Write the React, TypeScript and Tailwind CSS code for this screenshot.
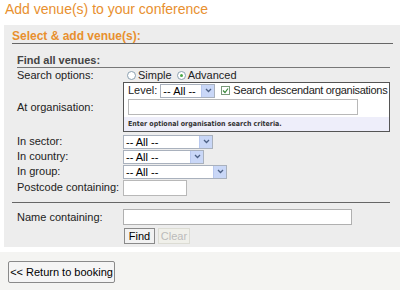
import React from "react";

const Sel = ({ w }: { w: number }) => (
  <div
    className="flex h-[14px] shrink-0 items-stretch border border-[#a9b1bd] bg-white text-[11px] leading-[12px] text-black"
    style={{ width: w }}
  >
    <span className="flex-1 pl-[2px]">-- All --</span>
    <span className="flex w-[13px] items-center justify-center bg-[#c9d7f7] border-l border-[#b8c8ee]">
      <svg width="7" height="5" viewBox="0 0 7 5">
        <path d="M1 1 L3.5 3.5 L6 1" stroke="#4d6185" strokeWidth="1.3" fill="none" />
      </svg>
    </span>
  </div>
);

const Radio = ({ on }: { on?: boolean }) => (
  <span className="relative inline-block h-[9px] w-[9px] rounded-full border border-[#8aa0b0] bg-white">
    {on && <span className="absolute left-[2px] top-[2px] h-[3px] w-[3px] rounded-full bg-[#4aa84a]" />}
  </span>
);

const Row = ({ label, h, children, cls = "" }: { label: string; h: number; children?: React.ReactNode; cls?: string }) => (
  <div className={"flex items-center " + cls} style={{ height: h }}>
    <div className="w-[106px] shrink-0 whitespace-nowrap text-[11px] text-[#222]">{label}</div>
    {children}
  </div>
);

export default function App() {
  return (
    <div
      className="flex h-[290px] w-[400px] flex-col overflow-hidden bg-white"
      style={{ fontFamily: '"Liberation Sans", Arial, sans-serif' }}
    >
      <div className="h-[25px] shrink-0 pl-[5px] text-[14px] leading-[19px] text-[#e8902f]">
        Add venue(s) to your conference
      </div>
      <div className="ml-[4px] h-[222px] shrink-0 bg-[#ededed] pl-[8px] pr-[7px] pt-[4px]">
        <div className="h-[15px] border-b border-[#666] text-[12px] font-bold leading-[14px] text-[#e8902f]">
          Select &amp; add venue(s):
        </div>
        <div className="ml-[5px] mr-[3px] mt-[10px]">
          <div className="h-[14px] border-b border-[#777] text-[11px] font-bold leading-[12px] text-[#444]">Find all venues:</div>
          <Row label="Search options:" h={14}>
            <div className="flex items-center whitespace-nowrap text-[11px] text-[#222]">
              <span className="ml-[4px] mr-[2px] flex"><Radio /></span>
              <span>Simple</span>
              <span className="ml-[5px] mr-[2px] flex"><Radio on /></span>
              <span>Advanced</span>
            </div>
          </Row>
          <Row label="At organisation:" h={50}>
            <div className="flex h-[50px] w-[267px] shrink-0 flex-col overflow-hidden border border-[#555] bg-white">
              <div className="flex h-[15px] items-center whitespace-nowrap pl-[4px] text-[11px] text-[#222]">
                <span className="mr-[3px]">Level:</span>
                <Sel w={55} />
                <span className="ml-[6px] mr-[3px] flex h-[9px] w-[9px] shrink-0 items-center justify-center border border-[#7a9a7a] bg-white">
                  <svg width="7" height="7" viewBox="0 0 7 7">
                    <path d="M1 3.5 L3 5.5 L6 1.5" stroke="#3a8a3a" strokeWidth="1.2" fill="none" />
                  </svg>
                </span>
                <span className="tracking-[-0.3px]">Search descendant organisations</span>
              </div>
              <div className="ml-[4px] mt-[1px] h-[16px] w-[230px] border border-[#b8b8b8] bg-white" />
              <div className="mt-[2px] flex flex-1 items-center whitespace-nowrap bg-[#eeeefa] pl-[4px] text-[7px] font-bold text-[#333]" style={{ fontFamily: '"DejaVu Sans Condensed", "DejaVu Sans", sans-serif' }}>
                Enter optional organisation search criteria.
              </div>
            </div>
          </Row>
          <Row label="In sector:" h={15} cls="mt-[2px]">
            <Sel w={90} />
          </Row>
          <Row label="In country:" h={15}>
            <Sel w={81} />
          </Row>
          <Row label="In group:" h={15}>
            <Sel w={104} />
          </Row>
          <Row label="Postcode containing:" h={17}>
            <div className="h-[16px] w-[64px] border border-[#b8b8b8] bg-white" />
          </Row>
        </div>
        <div className="mt-[6px] mr-[3px] border-b border-[#666]" />
        <div className="ml-[5px]">
          <Row label="Name containing:" h={16} cls="mt-[6px]">
            <div className="h-[16px] w-[229px] border border-[#b0b0b0] bg-white" />
          </Row>
          <div className="mt-[3px] flex pl-[107px]">
            <div className="flex h-[16px] w-[31px] items-center justify-center border border-[#8a8a8a] bg-[#f2f2f2] text-[11px] text-black">
              Find
            </div>
            <div className="ml-[3px] flex h-[16px] w-[32px] items-center justify-center border border-[#dcdcd4] bg-[#f0f0ea] text-[11px] text-[#bbb]">
              Clear
            </div>
          </div>
        </div>
      </div>
      <div className="mt-[5px] flex-1 bg-[#f4f4f2] pl-[8px] pt-[9px]">
        <div className="flex h-[22px] w-[107px] items-center justify-center rounded-[2px] border border-[#8a8a8a] bg-[#f5f5f5] text-[11px] text-black">
          &lt;&lt; Return to booking
        </div>
      </div>
    </div>
  );
}
